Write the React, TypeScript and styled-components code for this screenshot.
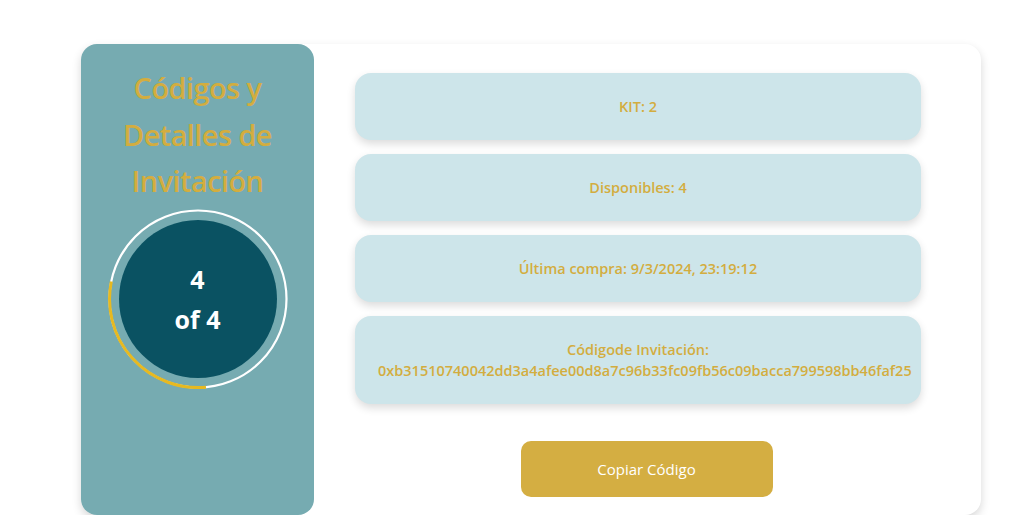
import styled, { createGlobalStyle } from 'styled-components'

const GlobalStyle = createGlobalStyle`
  html, body {
    margin: 0;
    padding: 0;
    background: #ffffff;
    font-family: 'Open Sans', 'Noto Sans', sans-serif;
  }
`

const Page = styled.div`
  padding: 44px 0 0 81px;
`

const Card = styled.section`
  display: flex;
  width: 900px;
  height: 471px;
  background: #ffffff;
  border-radius: 16px;
  box-shadow: 0 4px 10px rgba(0, 0, 0, 0.16);
`

const SidePanel = styled.aside`
  width: 233px;
  flex-shrink: 0;
  box-sizing: border-box;
  padding: 21px 12px 0;
  background: #76abb1;
  border-radius: 16px;
  display: flex;
  flex-direction: column;
  align-items: center;
  gap: 4px;
`

const Title = styled.h1`
  margin: 0;
  font-size: 29px;
  line-height: 46.5px;
  font-weight: 600;
  color: #d3ad3f;
  text-align: center;
  letter-spacing: -0.6px;
`

const Gauge = styled.div`
  position: relative;
  width: 180px;
  height: 180px;
  display: grid;
  place-items: center;
`

const Ring = styled.svg`
  position: absolute;
  inset: 0;
`

const Disc = styled.div`
  position: relative;
  width: 158px;
  height: 158px;
  border-radius: 50%;
  background: #0a5262;
  display: flex;
  flex-direction: column;
  align-items: center;
  justify-content: center;
  color: #ffffff;
  font-size: 25px;
  font-weight: 700;
  line-height: 40px;
`

const Main = styled.div`
  flex: 1;
  display: flex;
  flex-direction: column;
  align-items: center;
  padding: 29px 0 0;
`

const InfoList = styled.div`
  display: flex;
  flex-direction: column;
  gap: 14px;
  width: 566px;
  margin-left: -19px;
`

const InfoCard = styled.div`
  box-sizing: border-box;
  padding: 23px 23px;
  background: #cde5ea;
  border-radius: 16px;
  box-shadow: 0 4px 8px rgba(0, 0, 0, 0.14);
  color: #d3ad3f;
  font-size: 14.5px;
  font-weight: 600;
  line-height: 21px;
  text-align: center;
`

const Hash = styled.div`
  white-space: nowrap;
  text-align: left;
`

const CopyButton = styled.button`
  margin: 37px 2px 0 0;
  width: 252px;
  height: 56px;
  border: none;
  border-radius: 10px;
  background: #d4ae42;
  color: #ffffff;
  font-family: inherit;
  font-size: 15px;
  font-weight: 400;
  cursor: pointer;
`

const hash = '0xb31510740042dd3a4afee00d8a7c96b33fc09fb56c09bacca799598bb46faf25'

export default function App() {
  return (
    <Page>
      <GlobalStyle />
      <Card>
        <SidePanel>
          <Title>Códigos y Detalles de Invitación</Title>
          <Gauge>
            <Ring width="180" height="180" viewBox="0 0 180 180">
              <circle cx="90" cy="90" r="88.5" fill="none" stroke="#ffffff" strokeWidth="2.2" />
              <path
                d="M 98 178.2 A 88.5 88.5 0 0 1 3.3 72.5"
                fill="none"
                stroke="#e7b920"
                strokeWidth="3"
              />
            </Ring>
            <Disc>
              <span>4</span>
              <span>of 4</span>
            </Disc>
          </Gauge>
        </SidePanel>
        <Main>
          <InfoList>
            <InfoCard>KIT: 2</InfoCard>
            <InfoCard>Disponibles: 4</InfoCard>
            <InfoCard>Última compra: 9/3/2024, 23:19:12</InfoCard>
            <InfoCard>
              <div>Códigode Invitación:</div>
              <Hash>{hash}</Hash>
            </InfoCard>
          </InfoList>
          <CopyButton>Copiar Código</CopyButton>
        </Main>
      </Card>
    </Page>
  )
}
